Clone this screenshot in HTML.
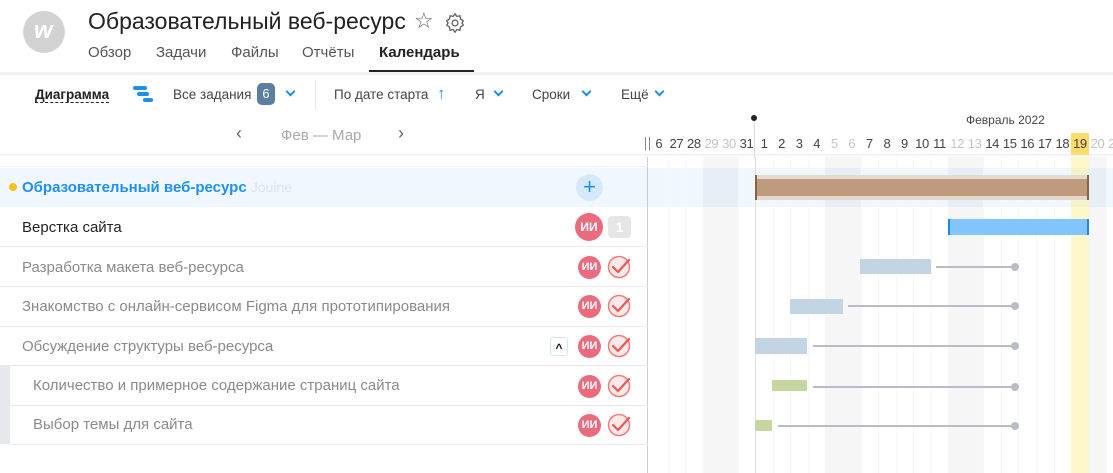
<!DOCTYPE html>
<html><head><meta charset="utf-8"><style>
*{margin:0;padding:0;box-sizing:border-box}
body{width:1113px;height:473px;overflow:hidden;background:#fff;font-family:"Liberation Sans","DejaVu Sans",sans-serif;color:#333;position:relative}
.a{position:absolute}
.tab{position:absolute;top:44px;font-size:15px;color:#555}
.tb{position:absolute;top:87px;font-size:13.5px;color:#444}
.chev{position:absolute;width:7px;height:7px;border-right:2px solid #1e90e6;border-bottom:2px solid #1e90e6;transform:rotate(45deg)}
.row{position:absolute;left:0;width:648px;height:40px;border-bottom:1px solid #ececec}
.rt{position:absolute;top:12px;font-size:15px;color:#8a8a8a;white-space:nowrap}
.av{position:absolute;width:23px;height:23px;border-radius:50%;background:#ea6b7d;color:#fff;font-size:11px;font-weight:bold;text-align:center;line-height:23px}
.cols{position:absolute;left:650px;display:flex}
.cols div{width:17.55px;flex:none;text-align:center}
.g div{border-left:1px solid #f7f7f7}
.bar{position:absolute}
.ln{position:absolute;height:2px;background:#b7bcc6}
.dot{position:absolute;width:8px;height:8px;border-radius:50%;background:#b7bcc6}
</style></head><body>
<div class="a" style="left:23px;top:11px;width:42px;height:42px;border-radius:50%;background:#d2d2d2"></div>
<div class="a" style="left:34px;top:17px;color:#fff;font-size:24px;font-weight:bold;font-style:italic">w</div>
<div class="a" style="left:88px;top:-10px;font-size:11px;color:#999">Jouine</div>
<div class="a" style="left:88px;top:8px;font-size:23px;color:#222">Образовательный веб-ресурс</div>
<div class="a" style="left:414px;top:8px;font-size:22px;color:#666">☆</div>
<svg class="a" style="left:444px;top:12px" width="22" height="22" viewBox="0 0 24 24" fill="none" stroke="#666" stroke-width="1.5"><circle cx="12" cy="12" r="3.2"/><path d="M12 2l2 2.8 3.4-.6.6 3.4L21 9.6l-1.4 2.4 1.4 2.4-3 2-.6 3.4-3.4-.6L12 22l-2-2.8-3.4.6-.6-3.4L3 14.4 4.4 12 3 9.6l3-2 .6-3.4 3.4.6z"/></svg>
<div class="tab" style="left:88px">Обзор</div>
<div class="tab" style="left:156px">Задачи</div>
<div class="tab" style="left:231px">Файлы</div>
<div class="tab" style="left:302px">Отчёты</div>
<div class="tab" style="left:379px;color:#222;font-weight:bold">Календарь</div>
<div class="a" style="left:369px;top:70px;width:105px;height:3px;background:#222"></div>
<div class="a" style="left:0;top:72px;width:1113px;height:3px;background:#f2f2f2"></div>
<div class="tb" style="left:35px;font-weight:bold;color:#222;border-bottom:1px dashed #222;line-height:15px">Диаграмма</div>
<div class="a" style="left:133px;top:86px;width:14px;height:4px;border-radius:2px;background:#1e90e6"></div>
<div class="a" style="left:137px;top:92px;width:12px;height:4px;border-radius:2px;background:#1e90e6"></div>
<div class="a" style="left:143px;top:98px;width:10px;height:4px;border-radius:2px;background:#1e90e6"></div>
<div class="tb" style="left:173px">Все задания</div>
<div class="a" style="left:257px;top:83px;width:18px;height:22px;border-radius:5px;background:#5b7fa0;color:#fff;font-size:13px;text-align:center;line-height:22px">6</div>
<div class="chev" style="left:287px;top:88px"></div>
<div class="a" style="left:315px;top:80px;width:1px;height:30px;background:#e5e5e5"></div>
<div class="tb" style="left:334px">По дате старта</div>
<div class="a" style="left:437px;top:84px;color:#1e90e6;font-size:17px">↑</div>
<div class="tb" style="left:475px">Я</div>
<div class="chev" style="left:495px;top:88px"></div>
<div class="tb" style="left:532px">Сроки</div>
<div class="chev" style="left:583px;top:88px"></div>
<div class="tb" style="left:621px">Ещё</div>
<div class="chev" style="left:656px;top:88px"></div>
<div class="a" style="left:236px;top:123px;font-size:18px;color:#666">‹</div>
<div class="a" style="left:281px;top:127px;font-size:15px;color:#aaa">Фев — Мар</div>
<div class="a" style="left:398px;top:123px;font-size:18px;color:#666">›</div>
<div class="a" style="left:0;top:154px;width:1113px;height:3px;background:linear-gradient(#eee,#fff)"></div>
<div class="a" style="left:0;top:168px;width:1113px;height:39px;background:#f0f7fe"></div>
<div class="cols g" style="top:157px;height:316px">
<div style="border:0"></div><div></div><div></div><div style="background:rgba(0,0,0,.035);border:0"></div><div style="background:rgba(0,0,0,.035);border:0"></div><div></div><div style="border-left:1px solid #ddd"></div><div></div><div></div><div></div><div style="background:rgba(0,0,0,.035);border:0"></div><div style="background:rgba(0,0,0,.035);border:0"></div><div></div><div></div><div></div><div></div><div></div><div style="background:rgba(0,0,0,.035);border:0"></div><div style="background:rgba(0,0,0,.035);border:0"></div><div></div><div></div><div></div><div></div><div></div><div style="background:rgba(250,235,120,.4);border:0"></div><div style="background:rgba(0,0,0,.035);border:0"></div><div></div>
</div>
<div class="a" style="left:647px;top:157px;width:1px;height:316px;background:#ccc"></div>
<div class="a" style="left:754px;top:118px;width:1px;height:40px;background:#ddd"></div>
<div class="a" style="left:751px;top:115px;width:6px;height:6px;border-radius:50%;background:#222"></div>
<div class="a" style="left:966px;top:113px;font-size:12px;color:#444">Февраль 2022</div>
<div class="a" style="left:645px;top:137px;width:5px;height:13px;border-left:1px solid #888;border-right:1px solid #888"></div>
<div class="a" style="left:1071px;top:133px;width:18px;height:22px;background:#fddc6a"></div>
<div class="cols" style="top:136px;font-size:13px;color:#444;line-height:16px;letter-spacing:-.4px">
<div>6</div><div>27</div><div>28</div><div style="color:#c4c4c4">29</div><div style="color:#c4c4c4">30</div><div>31</div><div>1</div><div>2</div><div>3</div><div>4</div><div style="color:#c4c4c4">5</div><div style="color:#c4c4c4">6</div><div>7</div><div>8</div><div>9</div><div>10</div><div>11</div><div style="color:#c4c4c4">12</div><div style="color:#c4c4c4">13</div><div>14</div><div>15</div><div>16</div><div>17</div><div>18</div><div>19</div><div style="color:#c4c4c4">20</div><div style="color:#c4c4c4">21</div>
</div>
<div class="bar" style="left:755px;top:175px;width:334px;height:25px;background:#e5d9cd"></div>
<div class="bar" style="left:755px;top:179px;width:334px;height:17px;background:#bf9b7d"></div>
<div class="bar" style="left:755px;top:175px;width:2px;height:25px;background:#8a6244"></div>
<div class="bar" style="left:1087px;top:175px;width:2px;height:25px;background:#8a6244"></div>
<div class="bar" style="left:948px;top:219px;width:141px;height:16px;background:#82c5fc;border-left:2px solid #1e88e5;border-right:2px solid #1e88e5"></div>
<div class="bar" style="left:860px;top:259px;width:71px;height:15px;background:#c3d5e4"></div>
<div class="ln" style="left:936px;top:266px;width:79px"></div><div class="dot" style="left:1011px;top:263px"></div>
<div class="bar" style="left:790px;top:299px;width:53px;height:15px;background:#c3d5e4"></div>
<div class="ln" style="left:848px;top:305px;width:167px"></div><div class="dot" style="left:1011px;top:302px"></div>
<div class="bar" style="left:755px;top:338px;width:52px;height:16px;background:#c3d5e4"></div>
<div class="ln" style="left:813px;top:345px;width:202px"></div><div class="dot" style="left:1011px;top:342px"></div>
<div class="bar" style="left:772px;top:380px;width:35px;height:11px;background:#c5d79f"></div>
<div class="ln" style="left:813px;top:386px;width:202px"></div><div class="dot" style="left:1011px;top:383px"></div>
<div class="bar" style="left:755px;top:420px;width:17px;height:11px;background:#c5d79f"></div>
<div class="ln" style="left:778px;top:425px;width:237px"></div><div class="dot" style="left:1011px;top:422px"></div>
<div class="a" style="left:0;top:166px;width:648px;height:1px;background:#eee"></div>
<div class="a" style="left:9px;top:183px;width:8px;height:8px;border-radius:50%;background:#f7c21b"></div>
<div class="a" style="left:22px;top:179px;font-size:15px;font-weight:bold;color:#1e90f0;white-space:nowrap">Образовательный веб-ресурс <span style="font-weight:normal;color:#dde3ea;font-size:14px">Jouine</span></div>
<div class="a" style="left:576px;top:174px;width:27px;height:27px;border-radius:50%;background:#d4eafc;color:#1e90e6;font-size:22px;text-align:center;line-height:26px">+</div>
<div class="row" style="top:207px"><div class="rt" style="left:22px;color:#222">Верстка сайта</div>
<div class="av" style="left:575px;top:6px;width:28px;height:28px;line-height:28px;font-size:12px">ИИ</div>
<div class="a" style="left:608px;top:9px;width:23px;height:22px;border-radius:4px;background:#e6e6e6;color:#fff;font-weight:bold;font-size:14px;text-align:center;line-height:22px">1</div></div>
<div class="row" style="top:247px"><div class="rt" style="left:22px">Разработка макета веб-ресурса</div></div>
<div class="row" style="top:287px"><div class="rt" style="left:22px;top:11px">Знакомство с онлайн-сервисом Figma для прототипирования</div></div>
<div class="row" style="top:326px"><div class="rt" style="left:22px">Обсуждение структуры веб-ресурса</div>
<div class="a" style="left:550px;top:11px;width:18px;height:19px;border:1px solid #cfe6fb;border-radius:3px;font-size:12px;font-weight:bold;text-align:center;line-height:20px;color:#111">^</div></div>
<div class="row" style="top:366px;left:10px;width:638px"><div class="rt" style="left:23px;top:11px">Количество и примерное содержание страниц сайта</div></div>
<div class="row" style="top:405px;left:10px;width:638px"><div class="rt" style="left:23px;top:11px">Выбор темы для сайта</div></div>
<div class="a" style="left:0;top:366px;width:10px;height:78px;background:#e6e9ec"></div>
<div class="av" style="left:578px;top:256px">ИИ</div>
<div class="av" style="left:578px;top:295px">ИИ</div>
<div class="av" style="left:578px;top:335px">ИИ</div>
<div class="av" style="left:578px;top:375px">ИИ</div>
<div class="av" style="left:578px;top:414px">ИИ</div>
<svg class="a" style="left:607px;top:255px" width="26" height="190" viewBox="0 0 26 190" fill="none">
<g stroke="#f47a7a" stroke-width="1.5" fill="#fde9e9"><circle cx="12" cy="12" r="10.5"/><circle cx="12" cy="51" r="10.5"/><circle cx="12" cy="91" r="10.5"/><circle cx="12" cy="131" r="10.5"/><circle cx="12" cy="170" r="10.5"/></g>
<g stroke="#f05555" stroke-width="2.2" stroke-linecap="round" stroke-linejoin="round"><path d="M6 12l5 5 11-12"/><path d="M6 51l5 5 11-12"/><path d="M6 91l5 5 11-12"/><path d="M6 131l5 5 11-12"/><path d="M6 170l5 5 11-12"/></g>
</svg>
</body></html>
